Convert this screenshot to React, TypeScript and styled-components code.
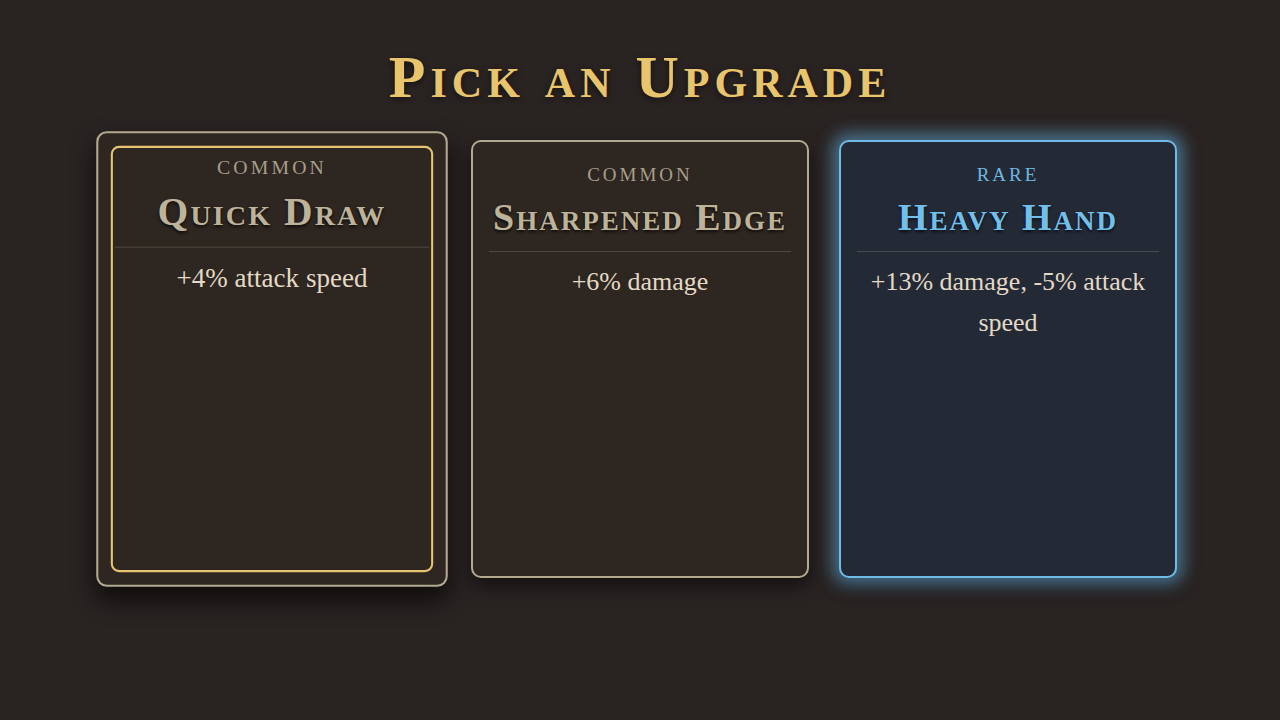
import React from "react";
import styled, { createGlobalStyle, css } from "styled-components";

const GlobalStyle = createGlobalStyle`
  html, body {
    margin: 0;
    padding: 0;
    background: #292322;
    width: 100%;
    height: 100%;
  }
  #root {
    min-height: 100vh;
  }
`;

type Rarity = "common" | "rare";

const Page = styled.div`
  display: flex;
  flex-direction: column;
  align-items: center;
  min-height: 720px;
  padding-top: 42px;
  box-sizing: border-box;
  background: #292322;
  font-family: "Liberation Serif", "DejaVu Serif", serif;
`;

const Title = styled.h1`
  margin: 0 0 28px;
  font-family: "Liberation Serif", serif;
  font-variant: small-caps;
  font-weight: 700;
  font-size: 60px;
  line-height: 70px;
  letter-spacing: 5px;
  color: #e8c46c;
  text-shadow: 0 2px 6px rgba(0, 0, 0, 0.5);
`;

const CardRow = styled.div`
  display: flex;
  gap: 30px;
`;

const Card = styled.div<{ $rarity: Rarity; $hovered?: boolean }>`
  position: relative;
  width: 338px;
  height: 438px;
  box-sizing: border-box;
  display: flex;
  flex-direction: column;
  align-items: center;
  padding: 18px 16px;
  border-radius: 10px;
  border: 2px solid #b3a98f;
  background: #2e2620;
  box-shadow: 0 8px 18px rgba(0, 0, 0, 0.5);
  ${(p) =>
    p.$rarity === "rare" &&
    css`
      background: #232a36;
      border-color: #6fbbe8;
      box-shadow: 0 0 16px 7px rgba(96, 165, 210, 0.6),
        0 8px 18px rgba(0, 0, 0, 0.4);
    `}
  ${(p) =>
    p.$hovered &&
    css`
      transform: scale(1.04);
      box-shadow: 0 12px 22px rgba(0, 0, 0, 0.65);
      &::before {
        content: "";
        position: absolute;
        inset: 12px;
        border: 2px solid #e6c471;
        border-radius: 8px;
        pointer-events: none;
      }
    `}
`;

const RarityLabel = styled.div<{ $rarity: Rarity }>`
  font-size: 19px;
  line-height: 30px;
  letter-spacing: 3px;
  text-transform: uppercase;
  color: ${(p) => (p.$rarity === "rare" ? "#6fb6e0" : "#a79f8b")};
`;

const Name = styled.h2<{ $rarity: Rarity }>`
  margin: 5px 0 0;
  font-family: "Liberation Serif", serif;
  font-variant: small-caps;
  font-weight: 700;
  font-size: 38px;
  line-height: 44px;
  letter-spacing: 2px;
  color: ${(p) => (p.$rarity === "rare" ? "#72bfec" : "#bdb39a")};
  text-shadow: 0 2px 3px rgba(0, 0, 0, 0.7);
  white-space: nowrap;
`;

const Divider = styled.hr`
  align-self: stretch;
  margin: 12px 0 9px;
  border: none;
  height: 1px;
  background: rgba(200, 190, 170, 0.22);
`;

const Description = styled.p`
  margin: 0;
  font-size: 26px;
  line-height: 41px;
  text-align: center;
  color: #e3d9c6;
`;

const upgrades: {
  rarity: Rarity;
  name: string;
  text: string;
  hovered?: boolean;
}[] = [
  { rarity: "common", name: "Quick Draw", text: "+4% attack speed", hovered: true },
  { rarity: "common", name: "Sharpened Edge", text: "+6% damage" },
  { rarity: "rare", name: "Heavy Hand", text: "+13% damage, -5% attack speed" },
];

export default function App() {
  return (
    <>
      <GlobalStyle />
      <Page>
        <Title>Pick an Upgrade</Title>
        <CardRow>
          {upgrades.map((u) => (
            <Card key={u.name} $rarity={u.rarity} $hovered={u.hovered}>
              <RarityLabel $rarity={u.rarity}>{u.rarity}</RarityLabel>
              <Name $rarity={u.rarity}>{u.name}</Name>
              <Divider />
              <Description>{u.text}</Description>
            </Card>
          ))}
        </CardRow>
      </Page>
    </>
  );
}
